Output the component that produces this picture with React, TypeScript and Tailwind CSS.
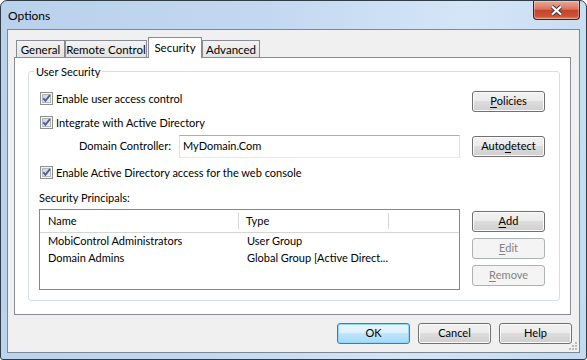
import type { ReactNode } from "react";

const CheckBox = () => (
  <svg width="13" height="13" viewBox="0 0 13 13" className="shrink-0">
    <defs>
      <linearGradient id="cbfill" x1="0" y1="0" x2="1" y2="1">
        <stop offset="0" stopColor="#c9ced6" />
        <stop offset="1" stopColor="#f4f5f7" />
      </linearGradient>
    </defs>
    <rect x="0.5" y="0.5" width="12" height="12" fill="#f7f7f7" stroke="#8e8f8f" />
    <rect x="2.5" y="2.5" width="8" height="8" fill="url(#cbfill)" stroke="#b3b8bf" />
    <path d="M3.3 6.2 L5.4 8.9 L9.9 3.1" fill="none" stroke="#4a5d8f" strokeWidth="1.8" />
  </svg>
);

const CheckRow = ({ children }: { children: ReactNode }) => (
  <div className="flex items-center gap-[3px] h-[13px]">
    <CheckBox />
    <span className="leading-[13px]">{children}</span>
  </div>
);

type BtnProps = { children: ReactNode; disabled?: boolean; primary?: boolean };

const Btn = ({ children, disabled, primary }: BtnProps) => {
  if (disabled) {
    return (
      <div className="w-[73px] h-[21px] shrink-0 flex items-center justify-center rounded-[3px] border border-[#adb2b5] bg-[#f4f4f4] text-[#838383]">
        {children}
      </div>
    );
  }
  if (primary) {
    return (
      <div className="w-[73px] h-[21px] shrink-0 flex items-center justify-center rounded-[3px] border border-[#3c7fb1] bg-[linear-gradient(#eaf6fd_0%,#d9f0fc_49%,#bee6fd_50%,#a7d9f5_100%)] shadow-[inset_0_0_0_1px_#8fd6fa]">
        {children}
      </div>
    );
  }
  return (
    <div className="w-[73px] h-[21px] shrink-0 flex items-center justify-center rounded-[3px] border border-[#707070] bg-[linear-gradient(#f2f2f2_0%,#ebebeb_49%,#dddddd_50%,#cfcfcf_100%)] shadow-[inset_0_0_0_1px_#fcfcfc]">
      {children}
    </div>
  );
};

const principals = [
  { name: "MobiControl Administrators", type: "User Group" },
  { name: "Domain Admins", type: "Global Group [Active Direct..." },
];

export default function App() {
  return (
    <div className="w-[587px] h-[360px] flex flex-col border border-[#303c48] rounded-t-[7px] rounded-b-[3px] overflow-hidden bg-[linear-gradient(100deg,#b9d1eb_0%,#c2d8f0_40%,#d4e5f6_72%,#c4daf1_100%)] font-[family-name:Lato,sans-serif] text-[11px] text-black">
      {/* Title bar */}
      <div className="h-[28px] shrink-0 flex items-start justify-between pl-[7px] pr-[6px]">
        <span className="mt-[7px] text-[12px] leading-[15px]">Options</span>
        <div className="w-[47px] h-[19px] rounded-b-[4px] border border-t-0 border-[#4a1f18] bg-[linear-gradient(#e9a998_0%,#d9765f_45%,#c7432c_52%,#cc5238_85%,#e48a6a_100%)] shadow-[inset_0_0_0_1px_rgba(255,255,255,0.3)] flex items-center justify-center">
          <svg width="13" height="11" viewBox="0 0 13 11">
            <path d="M2 1.5 L11 9.5 M11 1.5 L2 9.5" stroke="#3d3d3d" strokeWidth="4" />
            <path d="M2 1.5 L11 9.5 M11 1.5 L2 9.5" stroke="#ffffff" strokeWidth="2.2" />
          </svg>
        </div>
      </div>

      {/* Client area */}
      <div className="relative flex-1 mx-[6px] mb-[6px] border border-[#7d8894] bg-[#f0f0f0] flex flex-col">
        {/* Tabs */}
        <div className="h-[27px] shrink-0 flex items-end pl-[8px] pt-[7px]">
          <div className="w-[49px] h-[17px] border border-b-0 border-[#898c95] bg-[linear-gradient(#f3f3f3,#e3e3e3)] flex items-center justify-center leading-[15px] text-[11.5px]">
            General
          </div>
          <div className="w-[82px] h-[17px] border border-b-0 border-[#898c95] bg-[linear-gradient(#f3f3f3,#e3e3e3)] flex items-center justify-center leading-[15px] text-[11.5px]">
            Remote Control
          </div>
          <div className="relative z-10 ml-[1px] w-[54px] h-[21px] -mb-px border border-b-0 border-[#898c95] bg-white flex items-start justify-center pt-[2px] leading-[15px] text-[11.5px]">
            Security
          </div>
          <div className="w-[58px] h-[17px] border border-b-0 border-[#898c95] bg-[linear-gradient(#f3f3f3,#e3e3e3)] flex items-center justify-center leading-[15px] text-[11.5px]">
            Advanced
          </div>
        </div>

        {/* Tab page */}
        <div className="h-[258px] shrink-0 ml-[6px] mr-[8px] border border-[#898c95] bg-white pt-[6px] pl-[13px] pr-[10px]">
          <fieldset className="border border-[#d5dfe5] rounded-[3px] pl-[11px] pr-[14px] pb-[10px]">
            <legend className="ml-[-6px] px-[2px] leading-[15px]">User Security</legend>

            <div className="mt-[12px] flex items-start justify-between h-[21px]">
              <div className="mt-[1px]">
                <CheckRow>Enable user access control</CheckRow>
              </div>
              <Btn>
                <u className="underline-offset-2">P</u>olicies
              </Btn>
            </div>

            <div className="mt-[4px]">
              <CheckRow>Integrate with Active Directory</CheckRow>
            </div>

            <div className="mt-[6px] flex items-center h-[23px]">
              <span className="w-[139px] pl-[39px] shrink-0">Domain Controller:</span>
              <div className="w-[281px] h-[23px] border border-[#abadb3] border-l-[#dbdfe6] border-r-[#dbdfe6] border-b-[#e3e9ef] bg-white flex items-center pl-[3px]">
                MyDomain.Com
              </div>
              <div className="ml-auto">
                <Btn>
                  Auto<u className="underline-offset-2">d</u>etect
                </Btn>
              </div>
            </div>

            <div className="mt-[8px]">
              <CheckRow>Enable Active Directory access for the web console</CheckRow>
            </div>

            <div className="mt-[11px] leading-[15px] ml-[-1px]">Security Principals:</div>

            <div className="mt-[4px] flex justify-between">
              <div className="ml-[-1px] w-[421px] h-[81px] border border-[#828790] bg-white flex flex-col">
                <div className="h-[23px] shrink-0 flex border-b border-[#d5d5d5]">
                  <div className="w-[199px] flex items-center pl-[8px] border-r border-[#d5d5d5] my-[3px]">Name</div>
                  <div className="w-[150px] flex items-center pl-[7px] border-r border-[#d5d5d5] my-[3px]">Type</div>
                  <div className="flex-1" />
                </div>
                {principals.map((p) => (
                  <div key={p.name} className="h-[17px] flex items-center">
                    <div className="w-[200px] pl-[8px] truncate">{p.name}</div>
                    <div className="w-[150px] pl-[7px] whitespace-nowrap">{p.type}</div>
                  </div>
                ))}
              </div>
              <div className="mt-[2px] flex flex-col gap-[6px]">
                <Btn>
                  <u className="underline-offset-2">A</u>dd
                </Btn>
                <Btn disabled>
                  <u className="underline-offset-2">E</u>dit
                </Btn>
                <Btn disabled>
                  <u className="underline-offset-2">R</u>emove
                </Btn>
              </div>
            </div>
          </fieldset>
        </div>

        {/* Dialog buttons */}
        <div className="mt-[8px] flex justify-end gap-[8px] pr-[7px]">
          <Btn primary>OK</Btn>
          <Btn>Cancel</Btn>
          <Btn>Help</Btn>
        </div>

        {/* Size grip */}
        <svg width="10" height="10" viewBox="0 0 10 10" className="absolute right-[1px] bottom-[1px]">
          <g fill="#b9bcc1">
            <rect x="7" y="1" width="2" height="2" />
            <rect x="4" y="4" width="2" height="2" />
            <rect x="7" y="4" width="2" height="2" />
            <rect x="1" y="7" width="2" height="2" />
            <rect x="4" y="7" width="2" height="2" />
            <rect x="7" y="7" width="2" height="2" />
          </g>
        </svg>
      </div>
    </div>
  );
}
